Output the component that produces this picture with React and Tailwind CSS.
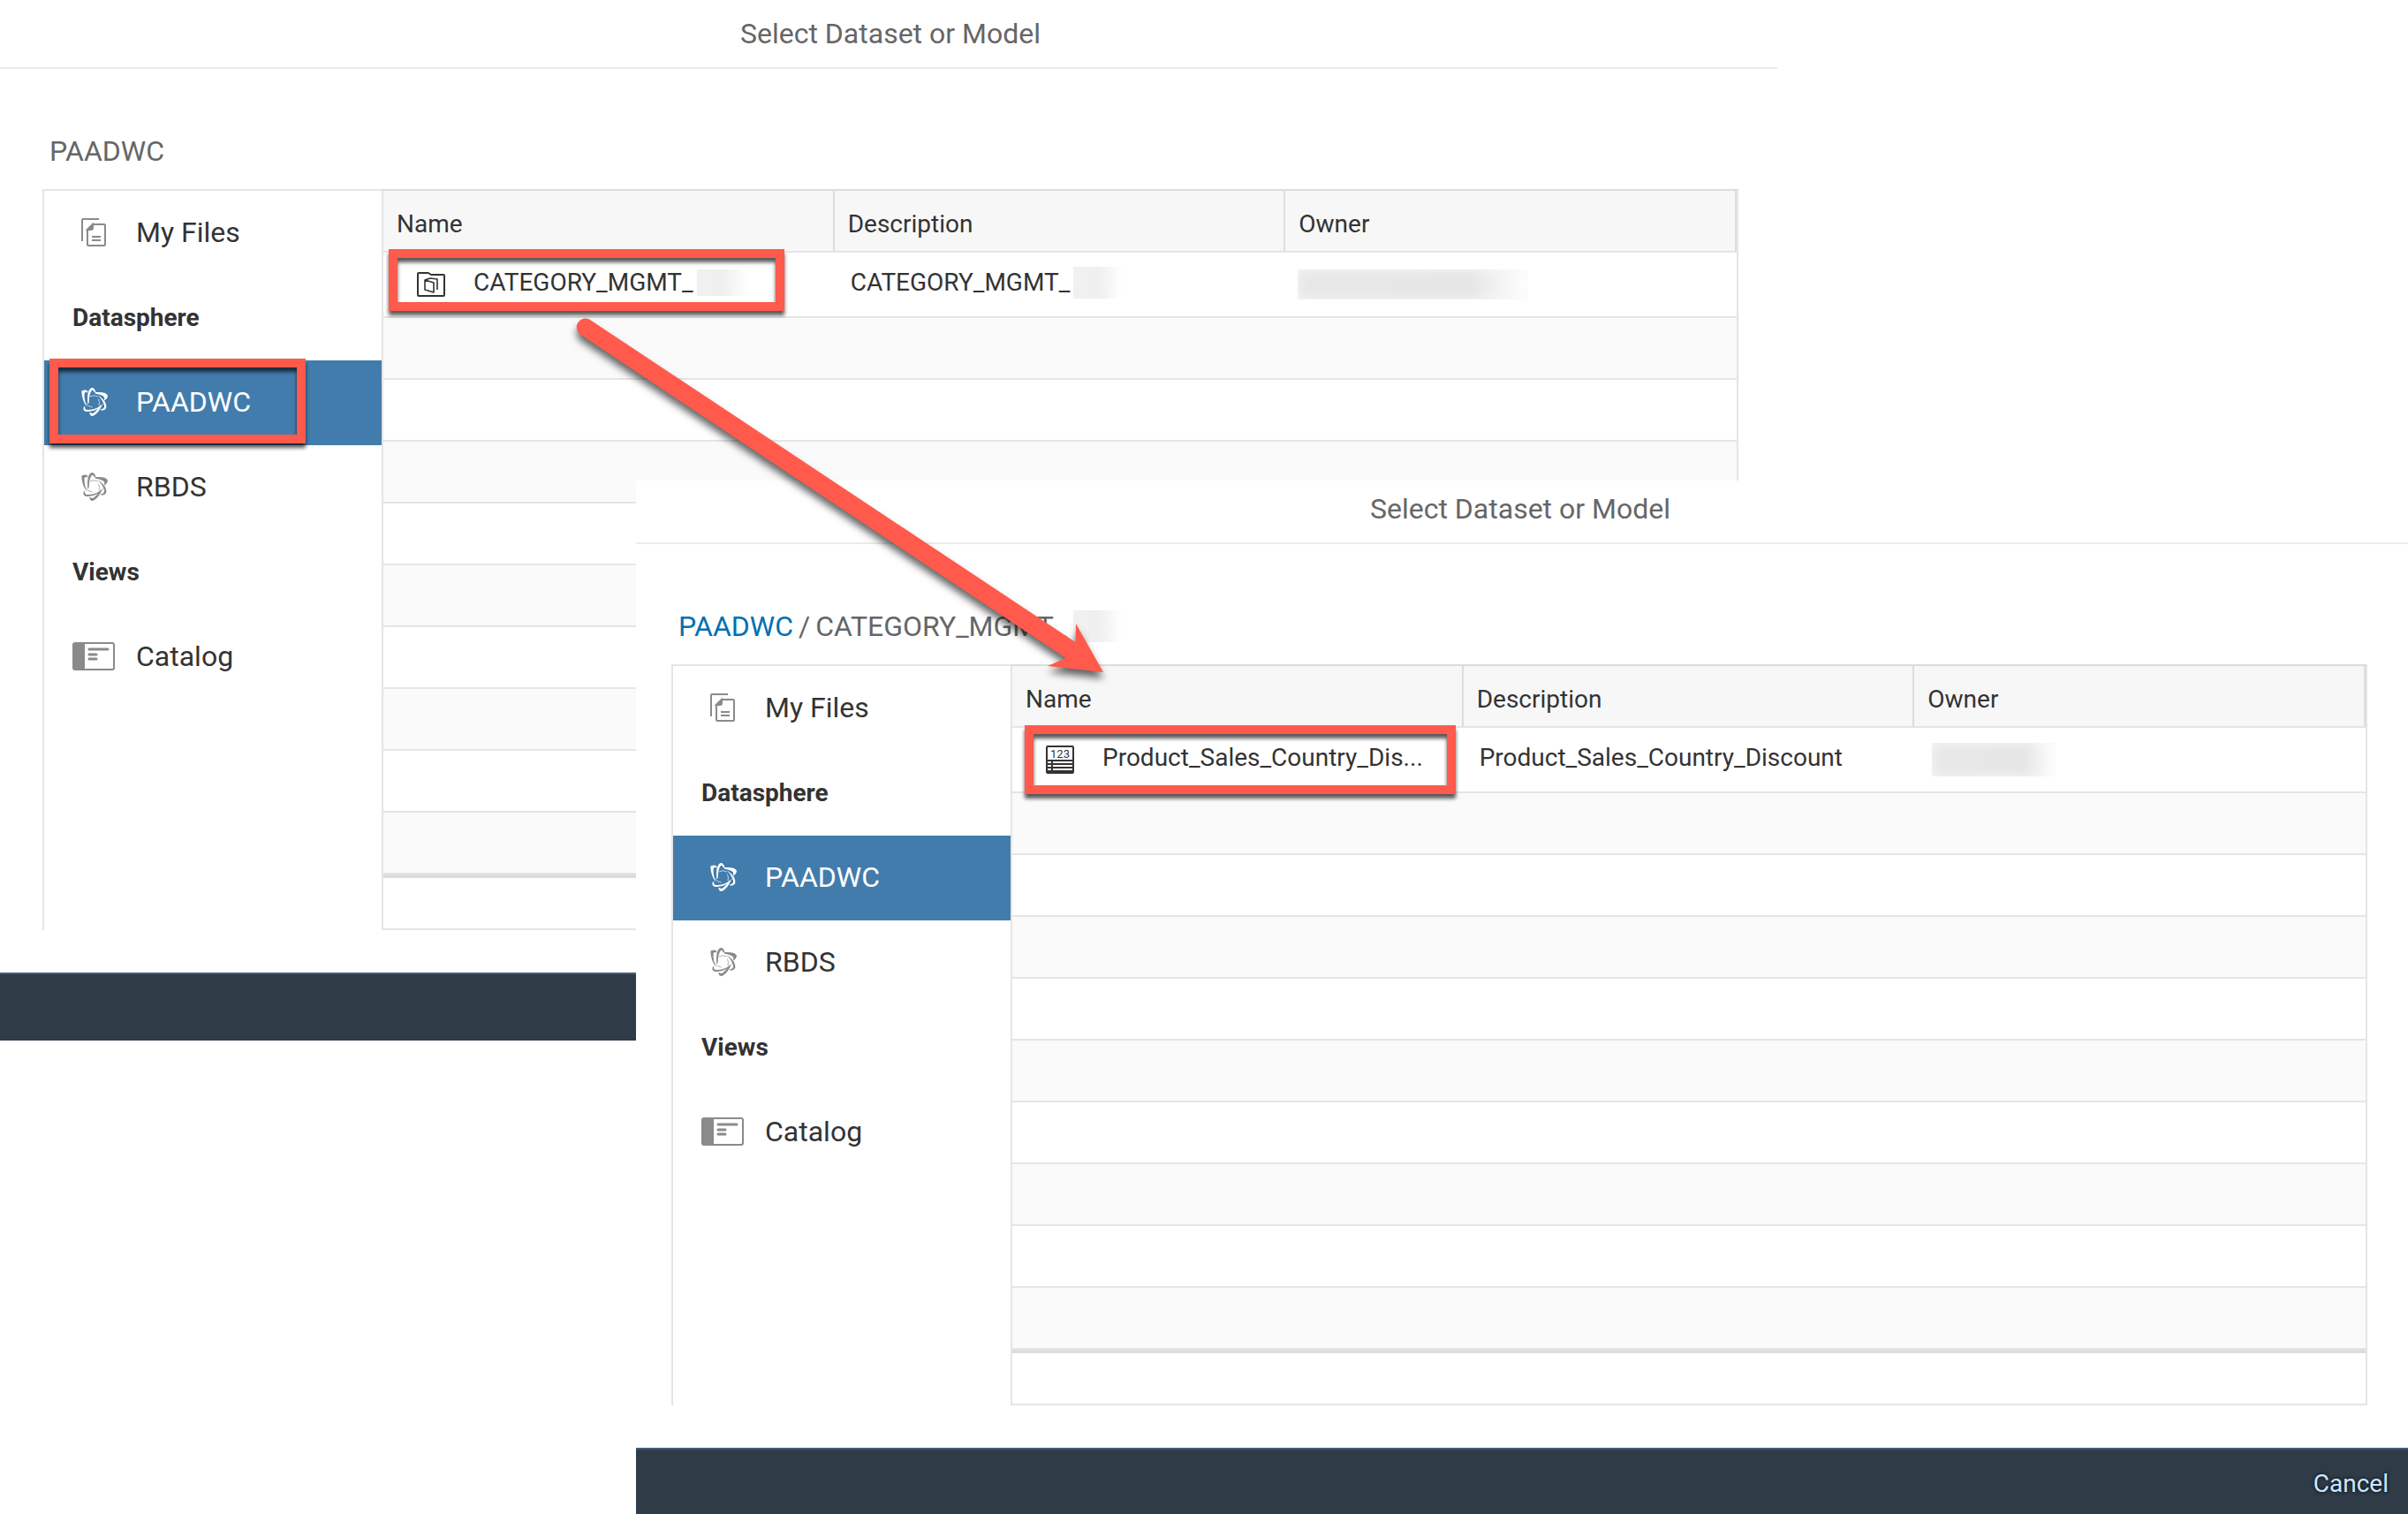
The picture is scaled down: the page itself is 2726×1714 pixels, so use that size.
import clsx from "clsx";

function FilesIcon() {
  return (
    <svg className="h-8 w-7" viewBox="0 0 28 32" fill="none" stroke="currentColor" strokeWidth="2" aria-hidden="true">
      <path d="M20 1H2Q1 1 1 2V26" />
      <path d="M13 7H26Q27 7 27 8V30Q27 31 26 31H8Q7 31 7 30V13Z" />
      <path d="M7 13L13 7V11Q13 13 11 13Z" fill="currentColor" />
      <path d="M12 21H22M12 25H22" />
    </svg>
  );
}

function SphereIcon() {
  return (
    <svg className="h-8 w-[30px]" viewBox="0 0 90 96" fill="currentColor" aria-hidden="true">
      <path d="M1 13Q1 8 9 8Q18 7 22 12V17Q14 12 11 18Q9 42 20 66Q2 44 1 13Z" />
      <path d="M22 54Q18 10 33 1Q44 -3 49 14L45 17Q41 5 36 9Q26 20 26 52Z" />
      <path d="M48 15Q88 13 90 28Q89 37 77 45Q81 35 77 30Q68 22 48 20Z" />
      <path d="M55 24Q78 38 84 56Q90 76 68 77L66 73Q80 72 78 60Q72 40 55 24Z" />
      <path d="M28 84L33 85Q36 89 44 84Q56 76 66 58L69 62Q60 82 44 94Q30 100 28 84Z" />
      <path d="M9 62L13 66Q10 74 22 75Q56 74 78 50Q60 78 24 81Q2 82 9 62Z" />
      <path d="M30 30Q42 22 56 30M16 52Q24 66 38 66M60 60Q64 48 58 38" fill="none" stroke="currentColor" strokeWidth="2" />
    </svg>
  );
}

function CatalogIcon() {
  return (
    <svg className="h-8 w-12" viewBox="0 0 48 32" fill="none" stroke="currentColor" strokeWidth="2" aria-hidden="true">
      <rect x="1" y="1" width="46" height="30" rx="2" />
      <path d="M2 1H14V31H2Z" fill="currentColor" stroke="none" />
      <path d="M19 8H40M19 14H27M19 19H27" strokeWidth="3" strokeLinecap="round" />
    </svg>
  );
}

function FolderIcon() {
  return (
    <svg className="h-7 w-8 shrink-0" viewBox="0 0 32 28" fill="none" stroke="currentColor" strokeWidth="2" strokeLinejoin="round" aria-hidden="true">
      <path d="M2 1H13L16 3H30Q31 3 31 4V26Q31 27 30 27H2Q1 27 1 26V2Q1 1 2 1Z" />
      <path d="M9 9L19 12V23L9 20ZM9 9L15 7L23 8V20" strokeWidth="1.6" />
    </svg>
  );
}

function ModelIcon() {
  return (
    <svg className="size-8 shrink-0" viewBox="0 0 32 32" fill="currentColor" aria-hidden="true">
      <rect x="1" y="1" width="30" height="30" rx="1" fill="none" stroke="currentColor" strokeWidth="2" />
      <text x="16" y="14" fontSize="13" textAnchor="middle">123</text>
      <path d="M1 16H31V31H1Z" />
      <path d="M2 19H6M8 19H30M2 23H6M8 23H30M2 27H6M8 27H30" stroke="#fff" strokeWidth="2" />
    </svg>
  );
}

const NAV = [
  { label: "My Files", Icon: FilesIcon },
  { heading: "Datasphere" },
  { label: "PAADWC", Icon: SphereIcon, selected: true },
  { label: "RBDS", Icon: SphereIcon },
  { heading: "Views" },
  { label: "Catalog", Icon: CatalogIcon },
];

// Red annotation frame; the caller gives its place over the framed element.
function Callout({ className }) {
  return (
    <span
      className={clsx(
        "pointer-events-none absolute z-10 border-[10px] border-[#ff5a4c] drop-shadow-[0_5px_2px_rgba(0,0,0,0.65)]",
        className,
      )}
    />
  );
}

// Blurred-out name suffix
function Redacted({ className }) {
  return <span className={clsx("inline-block shrink-0 bg-linear-to-r from-[#f1f1f1] via-[#efefef] to-white", className)} />;
}

// Blurred-out owner name
function RedactedOwner({ className }) {
  return (
    <span
      className={clsx(
        "block bg-linear-to-r from-[#e8e8e8] from-0% via-[#e6e6e6] via-75% to-white to-100% shadow-[inset_0_0_12px_#f8f8f8]",
        className,
      )}
    />
  );
}

function Sidebar({ highlight }) {
  return (
    <nav className="w-96 shrink-0 border-t-2 border-l-2 border-[#e5e5e5]">
      <ul>
        {NAV.map(({ label, heading, Icon, selected }) => (
          <li key={label ?? heading} className="relative">
            {heading ? (
              <h3 className="flex h-24 items-center pl-8 text-[28px] font-bold">{heading}</h3>
            ) : (
              <button
                type="button"
                className={clsx("flex h-24 w-full items-center gap-6 pb-[2px] pl-8 text-[32px]", selected && "bg-[#427cac] text-white")}
              >
                <span className={clsx("flex w-12 items-center", label !== "Catalog" && "pl-[10px]", !selected && "text-[#8a8a8a]")}>
                  <Icon />
                </span>
                {label}
              </button>
            )}
            {highlight && selected && <Callout className="-top-[2px] left-[6px] h-24 w-[290px]" />}
          </li>
        ))}
      </ul>
    </nav>
  );
}

function FileTable({ children }) {
  return (
    <div className="flex-1 border-2 border-[#e5e5e5] border-t-[#ddd]">
      <table className="w-full table-fixed border-separate border-spacing-0 text-[28px]">
        <thead>
          <tr>
            {["Name", "Description", "Owner"].map((name) => (
              <th
                key={name}
                scope="col"
                className="h-[70px] border-r-2 border-b-2 border-r-[#ddd] border-b-[#e5e5e5] bg-[#f7f7f7] pt-2 pl-[15px] text-left font-normal"
              >
                {name}
              </th>
            ))}
          </tr>
        </thead>
        <tbody className="[&_td]:border-b-2 [&_td]:border-[#e5e5e5]">
          <tr>{children}</tr>
          {Array.from({ length: 9 }, (_, i) => (
            <tr key={i} className="odd:bg-white even:bg-[#fafafa]">
              <td colSpan={3} className="h-[70px]" />
            </tr>
          ))}
        </tbody>
      </table>
      <div className="h-[61px] border-t-4 border-[#ddd]" />
    </div>
  );
}

function Dialog({ className, headerClass, bodyClass, footerClass, breadcrumb, highlightNav, row, footer }) {
  return (
    <section className={clsx("bg-white", className)}>
      <header className={clsx("border-b-2 border-[#ebebeb] pb-[18px] text-center", headerClass)}>
        <h2 className="text-[32px] leading-10 text-[#666]">Select Dataset or Model</h2>
      </header>
      <div className={clsx("pt-[73px] pb-12", bodyClass)}>
        <div className="mb-[23px] flex h-10 items-center gap-[6px] pl-2 text-[32px] leading-10 text-[#666]">{breadcrumb}</div>
        <div className="flex">
          <Sidebar highlight={highlightNav} />
          <FileTable>{row}</FileTable>
        </div>
      </div>
      <footer className={clsx("flex items-center justify-end border-t-2 border-[#425c76] bg-[#2f3c48] pt-1 pr-[22px]", footerClass)}>
        {footer}
      </footer>
    </section>
  );
}

export default function App() {
  return (
    <main className="relative grid overflow-hidden bg-white font-[Roboto,'Liberation_Sans',sans-serif] text-[#333]">
      <Dialog
        className="col-start-1 row-start-1 mr-[714px] self-start"
        headerClass="pt-[18px] pl-1"
        bodyClass="pl-12 pr-11"
        footerClass="h-[77px]"
        breadcrumb={<span>PAADWC</span>}
        highlightNav
        row={
          <>
            <td className="relative h-[74px] pl-[38px]">
              <div className="flex items-center gap-8">
                <FolderIcon />
                <span className="flex items-center pb-1">
                  CATEGORY_MGMT_
                  <Redacted className="ml-1 h-[30px] w-[58px]" />
                </span>
              </div>
              <Callout className="-top-1 left-[6px] h-[70px] w-[448px]" />
            </td>
            <td className="pl-[18px]">
              <span className="flex items-center pb-1">
                CATEGORY_MGMT_
                <Redacted className="ml-1 h-9 w-14" />
              </span>
            </td>
            <td className="pl-[14px]">
              <RedactedOwner className="h-[34px] w-[260px]" />
            </td>
          </>
        }
      />

      <Dialog
        className="relative col-start-1 row-start-1 mt-[544px] ml-[720px]"
        headerClass="pt-3 pr-1"
        bodyClass="pl-10 pr-[46px]"
        footerClass="h-[75px]"
        breadcrumb={
          <>
            <a href="#paadwc" className="text-[#0070b1]">PAADWC</a>
            <span>/</span>
            <span className="flex items-center">
              CATEGORY_MGMT_
              <Redacted className="ml-2 h-9 w-14" />
            </span>
          </>
        }
        row={
          <>
            <td className="relative h-[74px] pl-[38px]">
              <div className="flex items-center gap-8">
                <ModelIcon />
                <span className="pb-1">Product_Sales_Country_Dis...</span>
              </div>
              <Callout className="-top-[3px] left-[14px] h-[78px] w-[488px]" />
            </td>
            <td className="pl-[18px]">
              <span className="block pb-1">Product_Sales_Country_Discount</span>
            </td>
            <td className="pl-5">
              <RedactedOwner className="h-[38px] w-[140px]" />
            </td>
          </>
        }
        footer={
          <button type="button" className="text-[28px] text-[#cce6ff] [text-shadow:0_0_4px_#000]">
            Cancel
          </button>
        }
      />

      {/* Annotation arrow from the space folder to its content */}
      <svg
        className="pointer-events-none absolute top-[350px] left-[640px] z-20 h-[440px] w-[640px] drop-shadow-[0_7px_4px_rgba(0,0,0,0.6)]"
        viewBox="640 350 640 440"
        fill="#ff5a4c"
        aria-hidden="true"
      >
        <path d="M667.5 361.7L1217.5 727L1218 706L1249 761L1186 754L1206.5 745L656.5 378.3A10 10 0 0 1 667.5 361.7Z" />
      </svg>
    </main>
  );
}
